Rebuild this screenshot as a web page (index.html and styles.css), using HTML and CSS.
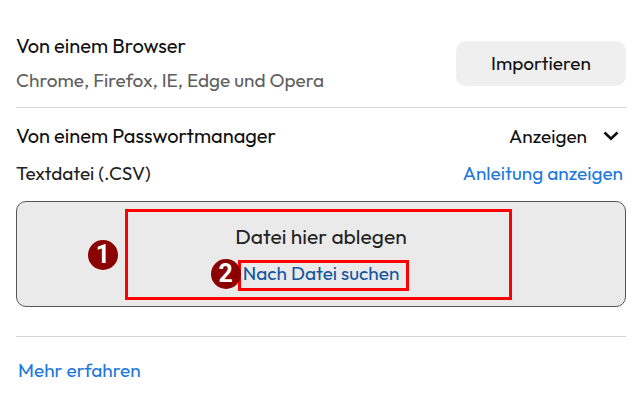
FILE: index.html
```html
<!DOCTYPE html>
<html lang="de">
<head>
  <meta charset="UTF-8">
  <meta name="viewport" content="width=device-width, initial-scale=1.0">
  <title>Passwörter importieren</title>
  <link rel="stylesheet" href="styles.css">
</head>

<body>
  <main class="import">
    <section class="row browser">
      <div>
        <h2>Von einem Browser</h2>
        <p class="hint">Chrome, Firefox, IE, Edge und Opera</p>
      </div>
      <button type="button" class="importButton">Importieren</button>
    </section>

    <section class="manager">
      <div class="row">
        <h2>Von einem Passwortmanager</h2>
        <button type="button" class="toggle">
          Anzeigen
          <svg class="chevron" width="16" height="10" viewBox="0 0 16 10" aria-hidden="true">
            <path d="M1.5 1.5 8 7.8 14.5 1.5" fill="none" stroke="currentColor" stroke-width="2.6"/>
          </svg>
        </button>
      </div>
      <div class="row fileRow">
        <h3>Textdatei (.CSV)</h3>
        <a href="#anleitung">Anleitung anzeigen</a>
      </div>
      <div class="dropzone">
        <div class="marker dropMarker"></div>
        <span class="badge dropBadge">1</span>
        <p class="dropTitle">Datei hier ablegen</p>
        <div class="browse">
          <a href="#datei">Nach Datei suchen</a>
          <div class="marker browseMarker"></div>
          <span class="badge browseBadge">2</span>
        </div>
      </div>
    </section>

    <footer>
      <a href="#mehr">Mehr erfahren</a>
    </footer>
  </main>
</body>
</html>
```
FILE: styles.css
```css
* {
  box-sizing: border-box;
}

body {
  margin: 0;
  background-color: #fff;
  color: #111;
  font-family: Outfit, Lato, sans-serif;
  font-size: 19px;
  line-height: 34px;
}

h2,
h3,
p {
  margin: 0;
  font-weight: 400;
}

h2 {
  font-size: 20px;
}

a {
  color: #2078dc;
  text-decoration: none;
}

button {
  border: none;
  padding: 0;
  color: inherit;
  font: inherit;
  cursor: pointer;
}

.import {
  padding: 29px 15px 0 16px;
}

.row {
  display: flex;
  align-items: center;
  justify-content: space-between;
}

.browser {
  padding-bottom: 10px;
  border-bottom: 1px solid #d4d4d4;
}

.hint {
  color: #606060;
}

.importButton {
  width: 170px;
  height: 45px;
  border-radius: 10px;
  background-color: #efefef;
}

.manager {
  padding: 11px 0 29px;
  border-bottom: 1px solid #d4d4d4;
}

.toggle {
  display: flex;
  align-items: center;
  gap: 16px;
  padding-right: 7px;
  background: none;
}

.fileRow {
  padding: 3px 3px 11px 0;
}

h3 {
  color: #222;
  font-size: 19px;
}

.dropzone {
  position: relative;
  padding: 17px 0 16px;
  border: 1px solid #555;
  border-radius: 10px;
  background-color: #eaeaea;
  text-align: center;
}

.dropTitle {
  padding-bottom: 3px;
  color: #222;
  font-size: 21px;
}

.browse {
  position: relative;
  width: max-content;
  margin: 0 auto;
}

.browse a {
  color: #14559f;
}

/* numbered callouts */
.marker {
  position: absolute;
  border: 3px solid #f00;
  pointer-events: none;
}

.dropMarker {
  top: 7px;
  bottom: 6px;
  left: calc(50% - 196px);
  width: 387px;
}

.browseMarker {
  top: 4px;
  bottom: -1px;
  left: -5px;
  right: -10px;
}

.badge {
  position: absolute;
  width: 30px;
  height: 30px;
  border-radius: 50%;
  background-color: #8b0000;
  color: #fff;
  font-family: Roboto, "Liberation Sans", sans-serif;
  font-size: 25px;
  font-weight: bold;
  line-height: 30px;
  text-align: center;
}

.dropBadge {
  top: 38px;
  left: calc(50% - 233px);
}

.browseBadge {
  top: 3px;
  left: -32px;
}

footer {
  padding: 16px 2px;
}
```
